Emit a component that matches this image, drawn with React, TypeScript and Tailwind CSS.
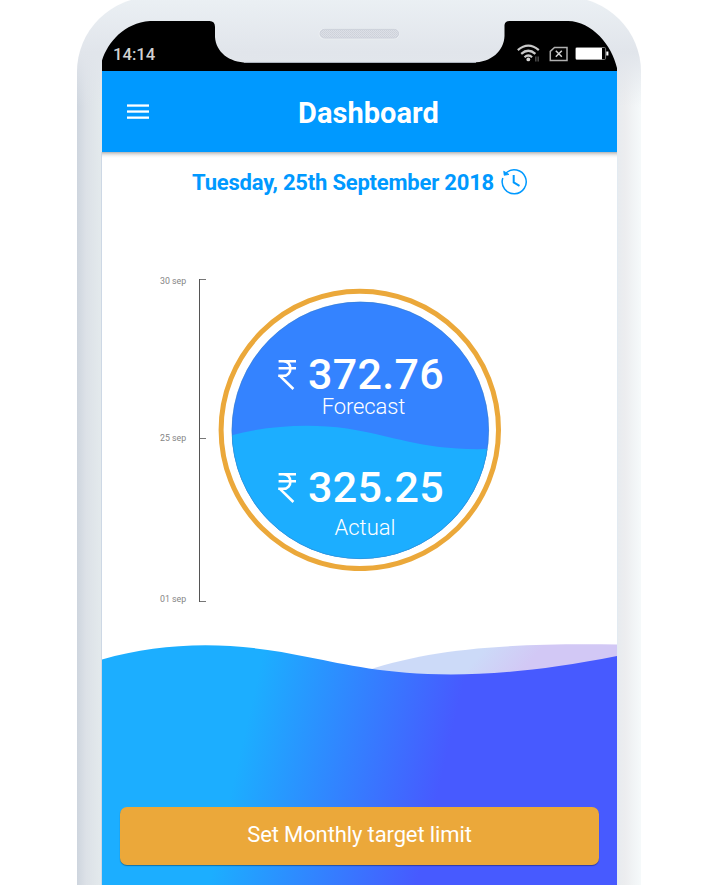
import React from "react";

function StatusIcons() {
  return (
    <svg className="absolute left-[415px] top-[40px]" width="96" height="26" viewBox="517 40 96 26" fill="none">
      <g stroke="#c9c9c9" strokeWidth="2.2">
        <path d="M517.8 50.2Q528.3 41.2 538.8 50.2" />
        <path d="M521.2 53.9Q528.3 47.6 535.4 53.9" />
        <path d="M524.5 57.2Q528.3 53.8 532.1 57.2" />
      </g>
      <circle cx="528.3" cy="59.4" r="1.9" fill="#d6d6d6" />
      <path d="M535.8 56.5V61.5M538.2 56.5V61.5" stroke="#4c4c4c" strokeWidth="1.5" />
      <path d="M554.5 47.4H567V60.5H550.3V51.4Z" stroke="#b0b0b0" strokeWidth="1.5" />
      <path d="M555.8 50.8L561.8 56.8M561.8 50.8L555.8 56.8" stroke="#d4d4d4" strokeWidth="1.5" />
      <rect x="575.6" y="47.5" width="30" height="12" rx="1.2" stroke="#777" />
      <rect x="576" y="48" width="26" height="11.3" fill="#fff" />
      <rect x="606.3" y="51.5" width="2.1" height="4" fill="#fff" />
    </svg>
  );
}

function StatusBar() {
  return (
    <div className="relative h-[71px] shrink-0">
      <svg className="absolute left-0 top-0" width="515" height="71" viewBox="102 0 515 71">
        <path
          d="M102 71V60.5C108 42 124 23 150 21H209.5Q215 21 215 27V37C216 52 229 62.5 247 62.5H473C491 62.5 504 51 504.5 36V25Q505 21 509.5 21H568C592 21.5 612 45 617 68V71Z"
          fill="#000"
        />
        <path d="M244 62.4H476" stroke="#c5cedb" strokeWidth="0.8" />
        <pattern id="grille" width="2" height="2" patternUnits="userSpaceOnUse">
          <rect width="2" height="2" fill="#dde0e7" />
          <rect width="1" height="1" fill="#cdd1d9" />
          <rect x="1" y="1" width="1" height="1" fill="#d0d4dc" />
        </pattern>
        <rect x="318.6" y="28.4" width="81" height="10.8" rx="5.4" fill="#eef1f4" />
        <rect x="320" y="29.3" width="78.6" height="8.8" rx="4.4" fill="url(#grille)" stroke="#c9ced8" strokeWidth="0.9" />
      </svg>
      <span className="absolute left-[11px] top-[45px] text-[16.7px] font-medium leading-5 text-[#d2d2d2]">14:14</span>
      <StatusIcons />
    </div>
  );
}

function Header() {
  return (
    <header className="relative z-10 flex h-[81px] shrink-0 items-center bg-[#0099ff] pl-[25px]">
      <button aria-label="Menu">
        <svg className="block" width="22" height="15" viewBox="0 0 22 15" fill="#fff">
          <rect y="0.4" width="22" height="2.3" />
          <rect y="6.4" width="22" height="2.3" />
          <rect y="12.5" width="22" height="2.3" />
        </svg>
      </button>
      <h1 className="ml-[149px] mt-[3px] text-[29px] font-bold leading-9 tracking-[0.05px] text-white">Dashboard</h1>
    </header>
  );
}

function DateRow() {
  return (
    <div className="flex h-[60px] shrink-0 items-center bg-[linear-gradient(to_bottom,#b4b4b4_0,#dcdcdc_2px,#f5f5f5_4px,#fff_6px)] pl-[90px] text-[#0099ff]">
      <p className="mt-[2px] whitespace-nowrap text-[22px] font-bold leading-7 tracking-[-0.2px]">Tuesday, 25th September 2018</p>
      <svg className="-mt-[2px] ml-[6.5px]" width="27" height="27" viewBox="0 0 27 27" fill="none" stroke="currentColor">
        <path d="M5 5A12 12 0 1 1 1.8 10" strokeWidth="1.5" />
        <path d="M2.7 3.2L3.2 7.3L8 6.4Z" fill="currentColor" strokeWidth="0.8" />
        <path d="M12.7 7V14.4L18.5 17.8" strokeWidth="2" />
      </svg>
    </div>
  );
}

function Timeline() {
  return (
    <div className="ml-[58px] mt-[62px] flex h-[330px] w-[47px] text-[8.8px] leading-[10px] text-[#858585]">
      <div className="flex w-[39px] flex-col">
        <span className="mt-[2px]">30 sep</span>
        <span className="mt-[147px]">25 sep</span>
        <span className="mt-[151px]">01 sep</span>
      </div>
      <div className="mt-[5px] flex h-[323px] w-[8px] shrink-0 flex-col border-l border-[#555]">
        <i className="h-px w-[6px] bg-[#777]" />
        <i className="mt-[158px] h-px w-[6px] bg-[#777]" />
        <i className="mt-auto h-px w-[6px] bg-[#777]" />
      </div>
    </div>
  );
}

function Amount({ value }: { value: string }) {
  return (
    <div className="flex h-[44px] items-center justify-center gap-[12px] whitespace-nowrap">
      <svg width="20" height="32" viewBox="0 0 20 32" fill="none" stroke="#fff" strokeWidth="2.6">
        <path d="M2.6 3.2H20M2.6 10.2H20M2.2 17.8H7.2C16.8 17.8 16.8 3.2 7.2 3.2M3.4 17.4L17.4 31" />
      </svg>
      <span className="text-[43px] font-medium leading-[44px] tracking-[0.35px]">{value}</span>
    </div>
  );
}

function Gauge() {
  return (
    <div className="relative ml-[11px] mt-[76px] h-[283px] w-[283px] shrink-0">
      <svg className="absolute inset-0" width="283" height="283" viewBox="218 288 283 283">
        <defs>
          <clipPath id="dial">
            <circle cx="360.3" cy="430.4" r="128.6" />
          </clipPath>
        </defs>
        <circle cx="359.8" cy="429.9" r="138.7" fill="#fff" stroke="#eba83a" strokeWidth="5" />
        <g clipPath="url(#dial)">
          <rect x="231" y="301" width="259" height="260" fill="#3483ff" />
          <path d="M231 435.5C264 426 309 423 347 428.5C396 436 423 451 490 449V561H231Z" fill="#1caeff" />
        </g>
        <circle cx="360.3" cy="430.4" r="128.3" fill="none" stroke="#3c7cb3" strokeOpacity=".5" strokeWidth=".8" />
      </svg>
      <div className="relative flex flex-col items-center text-white">
        <div className="ml-px mt-[64px]"><Amount value="372.76" /></div>
        <p className="-mt-px ml-[8px] text-[22px] font-light leading-6 tracking-[-0.1px]">Forecast</p>
        <div className="ml-px mt-[46px]"><Amount value="325.25" /></div>
        <p className="ml-[11px] mt-[7px] text-[22px] font-light leading-6">Actual</p>
      </div>
    </div>
  );
}

function TargetFooter() {
  return (
    <footer className="relative mt-auto h-[245px] shrink-0 px-[18px] pt-[167px]">
      <svg className="absolute left-0 top-0" width="515" height="245" viewBox="102 640 515 245">
        <defs>
          <linearGradient id="sea" gradientUnits="userSpaceOnUse" x1="265" y1="645" x2="462" y2="691">
            <stop stopColor="#1caeff" />
            <stop offset="1" stopColor="#475aff" />
          </linearGradient>
          <linearGradient id="haze" gradientUnits="userSpaceOnUse" x1="496" y1="636" x2="528" y2="664">
            <stop stopColor="#ccdaf8" />
            <stop offset="1" stopColor="#d2c8f5" />
          </linearGradient>
        </defs>
        <path d="M360 673C425 649 505 643 617 644.5V680H360Z" fill="url(#haze)" />
        <path d="M102 659.5C167 641.5 232 640.5 310 657.5C367 668.5 447 690 617 656V885H102Z" fill="url(#sea)" />
      </svg>
      <button className="relative flex h-[58px] w-[479px] items-center justify-center rounded-[7px] bg-[#eba83a] pb-[4px] text-[22px] tracking-[-0.12px] text-white shadow-[0_1px_1px_rgba(0,0,0,0.35)]">
        Set Monthly target limit
      </button>
    </footer>
  );
}

export default function App() {
  return (
    <main className="h-[885px] w-[724px] overflow-hidden bg-white pl-[77px] font-['Roboto',sans-serif]">
      <div className="-mt-[3px] h-[888px] w-[564px] rounded-t-[75px] bg-[linear-gradient(to_bottom,#ebf0f4_0,#e1e5eb_55px,transparent_110px),linear-gradient(to_right,#ced5de_0,#dce1e7_9px,#e3e9ec_23px,#e5eaee_50%,#e7ebef_540px,#ecedef_548px,#f5f9fa_563px)] pl-[25px] pt-[3px]">
        <div className="flex h-[885px] w-[515px] flex-col">
          <StatusBar />
          <Header />
          <div className="flex min-h-0 flex-1 flex-col bg-white shadow-[-1px_0_0_#cdd8e5,1px_0_0_#e3ebf2]">
            <DateRow />
            <div className="flex">
              <Timeline />
              <Gauge />
            </div>
            <TargetFooter />
          </div>
        </div>
      </div>
    </main>
  );
}
